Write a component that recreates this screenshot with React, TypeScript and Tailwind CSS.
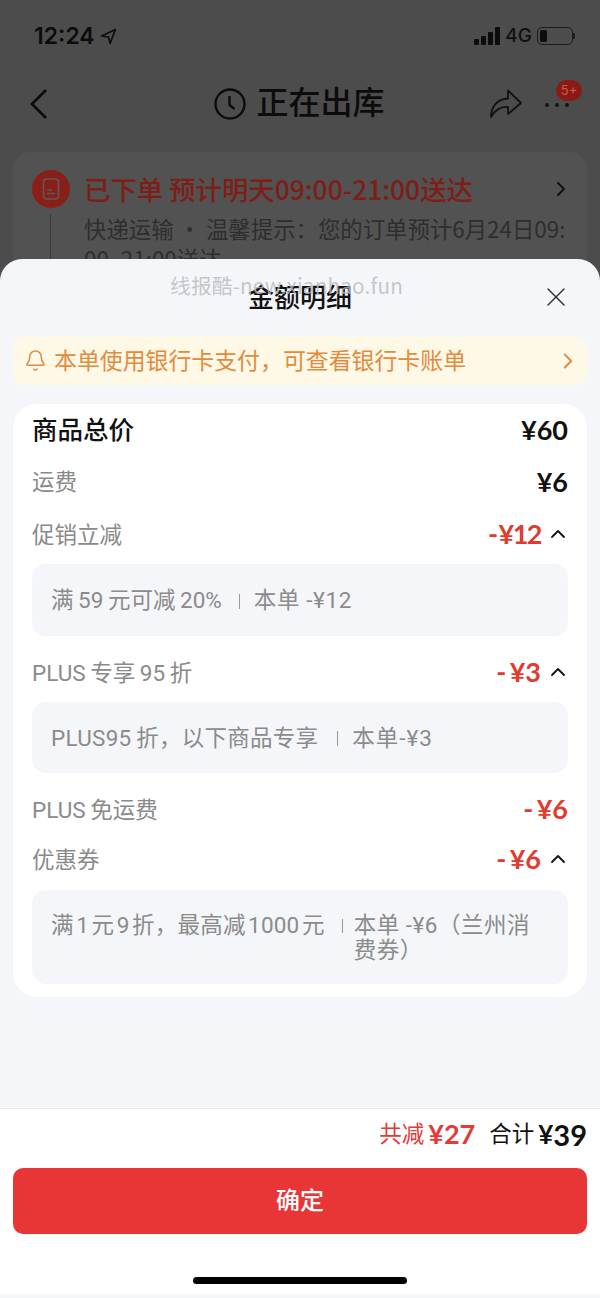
import { Bell, ChevronRight, ChevronUp, X } from "lucide-react";

const font = { fontFamily: 'Roboto, "Noto Sans CJK SC", sans-serif' };

function Row({ label, amount, open, amountClass, className }: { label: string; amount: string; open?: boolean; amountClass?: string; className?: string }) {
    return (
        <div className={`flex items-center justify-between h-[34px] ${className ?? ""}`}>
            <span className="pt-[2px] text-[22.5px] text-[#8a8a8a]">{label}</span>
            <span className="flex items-center">
                <span className={`-mt-[2px] text-[27px] font-bold text-[#e23a2e] font-['Lato','Noto_Sans_CJK_SC',sans-serif] ${amountClass ?? ""}`}>{amount}</span>
                {open && <ChevronUp className="ml-[5px] -mr-[2px] w-[24px] h-[24px] text-[#111] -mt-[3px]" strokeWidth={1.8} />}
            </span>
        </div>
    );
}

function Detail({ children, className }: { children: React.ReactNode; className?: string }) {
    return (
        <div className={`rounded-[14px] bg-[#f4f6fa] px-[19px] text-[22.5px] text-[#8b8b8b] ${className ?? ""}`}>
            {children}
        </div>
    );
}

export default function App() {
    return (
        <div className="relative w-[600px] h-[1298px] overflow-hidden flex flex-col bg-[#4c4c4c]" style={font}>
            {/* dimmed order page behind the sheet */}
            <div className="h-[281px] shrink-0 overflow-hidden px-[13px]">
                <div className="h-[72px] px-[21px] flex items-center justify-between text-[#0c0c0c]">
                    <div className="flex items-center gap-[5px]">
                        <span className="text-[23px] font-semibold font-['Inter',sans-serif]">12:24</span>
                        <svg width="17" height="17" viewBox="0 0 16 16" fill="none" stroke="#0c0c0c" strokeWidth="1.5">
                            <path d="M14.5 1.5 1.5 7.5l6.5 1 1.5 6z" strokeLinejoin="round" />
                        </svg>
                    </div>
                    <div className="flex items-center gap-[5px] -mr-[9px]">
                        <div className="flex items-end gap-[2px] h-[18px]">
                            <div className="w-[5px] h-[6px] bg-[#0c0c0c] rounded-[1px]" />
                            <div className="w-[5px] h-[9px] bg-[#0c0c0c] rounded-[1px]" />
                            <div className="w-[5px] h-[13px] bg-[#0c0c0c] rounded-[1px]" />
                            <div className="w-[5px] h-[18px] bg-[#0c0c0c] rounded-[1px]" />
                        </div>
                        <span className="text-[19px] font-medium text-[#101010] font-['Inter',sans-serif]">4G</span>
                        <div className="flex items-center">
                            <div className="w-[36px] h-[18px] rounded-[5px] border border-[#1c1c1c] p-[2px]">
                                <div className="w-[7px] h-full bg-[#0c0c0c] rounded-[2px]" />
                            </div>
                            <div className="w-[2px] h-[6px] bg-[#1c1c1c] rounded-r-[1px]" />
                        </div>
                    </div>
                </div>
                <div className="relative h-[65px] flex items-center justify-center text-[#0c0c0c]">
                    <svg className="absolute left-[15px] top-[15px]" width="22" height="34" viewBox="0 0 22 34" fill="none" stroke="#0c0c0c" strokeWidth="2.6">
                        <path d="M18 3 4 17l14 14" />
                    </svg>
                    <div className="flex items-center gap-[9px] -mt-[1px] -ml-[2px]">
                        <svg width="34" height="34" viewBox="0 0 34 34" fill="none" stroke="#0c0c0c" strokeWidth="2.4">
                            <circle cx="17" cy="17" r="14.5" />
                            <path d="M16.5 9v9l5 4" />
                        </svg>
                        <span className="text-[32px] leading-[40px] font-medium -mt-[3px]">正在出库</span>
                    </div>
                    <svg className="absolute left-[476px] top-[16px]" width="34" height="32" viewBox="0 0 34 32" fill="none" stroke="#111" strokeWidth="1.8" strokeLinejoin="round">
                        <path d="M19 2.5 32 15 19 26v-7C11 18.500 6 22 2 29c0-10 6-18 17-18.500z" />
                    </svg>
                    <div className="absolute left-[532px] top-[31px] flex gap-[6px]">
                        <div className="w-[4px] h-[4px] rounded-full bg-[#151515]" />
                        <div className="w-[4px] h-[4px] rounded-full bg-[#151515]" />
                        <div className="w-[4px] h-[4px] rounded-full bg-[#151515]" />
                    </div>
                    <div className="absolute left-[543px] top-[8px] w-[26px] h-[21px] rounded-full bg-[#8a1b14] flex items-center justify-center text-[13px] text-[#d05a50] font-['Inter',sans-serif]">
                        5+
                    </div>
                </div>
                <div className="mt-[15px] h-[140px] rounded-[18px] bg-[#525252] pt-[18px] pl-[19px] pr-[20px] font-['Noto_Sans_CJK_SC',sans-serif]">
                    <div className="flex items-center h-[38px]">
                        <div className="w-[38px] h-[38px] rounded-full bg-[#8a1f18] flex items-center justify-center shrink-0">
                            <svg width="18" height="22" viewBox="0 0 18 22" fill="none" stroke="#5a5a5a" strokeWidth="1.6">
                                <rect x="1.500" y="1" width="15" height="20" rx="3" />
                                <path d="M5 12h5M5 15.500h8" />
                            </svg>
                        </div>
                        <span className="ml-[14px] text-[26.4px] font-medium text-[#7f1d17] whitespace-nowrap">已下单 预计明天09:00-21:00送达</span>
                        <ChevronRight className="ml-auto -mr-[6px] w-[24px] h-[24px] text-[#0f0f0f]" strokeWidth={1.9} />
                    </div>
                    <div className="flex">
                        <div className="ml-[18px] w-px h-[60px] bg-[#3a3a3a] mt-[6px]" />
                        <div className="ml-[33px] pt-[5px] text-[22.4px] leading-[30px] text-[#2e2e2e] whitespace-nowrap">
                            <p>快递运输 · 温馨提示：您的订单预计6月24日09:</p>
                            <p>00–21:00送达</p>
                        </div>
                    </div>
                </div>
            </div>

            {/* price detail sheet */}
            <div className="flex-1 flex flex-col -mt-[22px] rounded-t-[22px] bg-[#f4f6fa] relative">
                <div className="h-[77px] relative flex items-center justify-center">
                    <span className="text-[26px] font-medium text-[#111] -mb-[1px]">金额明细</span>
                    <X className="absolute right-[28px] top-[22px] w-[32px] h-[32px] text-[#333]" strokeWidth={1.1} />
                </div>
                <div className="mx-[13px] h-[49px] rounded-[12px] bg-[#fef8e6] flex items-center pl-[11px] pr-[6px] text-[#e38b3d]">
                    <Bell className="w-[23px] h-[23px]" strokeWidth={1.6} />
                    <span className="ml-[7px] pt-[3px] text-[22.9px]">本单使用银行卡支付，可查看银行卡账单</span>
                    <ChevronRight className="ml-auto w-[26px] h-[26px]" strokeWidth={1.7} />
                </div>

                <div className="mt-[19px] mx-[13px] h-[593px] rounded-[24px] bg-white px-[19px] pt-[9px]">
                    <div className="flex items-center justify-between h-[34px]">
                        <span className="pt-[1px] text-[25.5px] font-medium text-[#111]">商品总价</span>
                        <span className="text-[27px] font-bold text-[#111] font-['Lato','Noto_Sans_CJK_SC',sans-serif]">¥60</span>
                    </div>
                    <div className="mt-[18px] flex items-center justify-between h-[34px]">
                        <span className="pt-[2px] text-[22.5px] text-[#8a8a8a]">运费</span>
                        <span className="text-[27px] font-bold text-[#111] font-['Lato','Noto_Sans_CJK_SC',sans-serif]">¥6</span>
                    </div>
                    <Row label="促销立减" amount="-&#8201;¥12" open amountClass="tracking-[-1.5px]" className="mt-[19px]" />
                    <Detail className="mt-[12px] h-[72px] pt-[2px] flex items-center">
                        满&#8201;59&#8201;元可减&#8201;20%
                        <span className="ml-[17px] mr-[14px] w-px h-[15px] bg-[#999]" />
                        <span className="tracking-[0.6px]">本单 -¥12</span>
                    </Detail>
                    <Row label="PLUS&#8201;专享&#8201;95&#8201;折" amount="-&#8201;¥3" open className="mt-[20px]" />
                    <Detail className="mt-[12px] h-[71px] pt-[2px] flex items-center">
                        <span className="tracking-[0.25px]">PLUS95&#8201;折，以下商品专享</span>
                        <span className="ml-[19px] mr-[14px] w-px h-[15px] bg-[#999]" />
                        <span className="tracking-[1px]">本单-¥3</span>
                    </Detail>
                    <Row label="PLUS&#8201;免运费" amount="-&#8201;¥6" className="mt-[20px]" />
                    <Row label="优惠券" amount="-&#8201;¥6" open className="mt-[16px]" />
                    <Detail className="mt-[13px] h-[94px] pt-[23px] flex items-start leading-[25px]">
                        <span className="whitespace-nowrap tracking-[0.2px]">满&#8202;1&#8202;元&#8202;9&#8202;折，最高减&#8202;1000&#8202;元</span>
                        <span className="ml-[17px] mr-[11px] mt-[6px] w-px h-[14px] bg-[#999] shrink-0" />
                        <span className="whitespace-nowrap tracking-[0.5px]">
                            本单 -¥6（兰州消
                            <br />
                            费券）
                        </span>
                    </Detail>
                </div>

                <div className="mt-[111px] flex-1 bg-white border-t border-[#e8e8e8] px-[13px] mb-[4px] relative">
                    <div className="flex items-center justify-end h-[53px] -mt-[1px]">
                        <span className="text-[22.5px] text-[#e53935]">共减</span>
                        <span className="ml-[4px] text-[27px] font-bold text-[#e53935] font-['Lato',sans-serif]">¥27</span>
                        <span className="ml-[14px] text-[22.5px] text-[#111]">合计</span>
                        <span className="ml-[4px] text-[26px] font-bold text-[#111] font-['Lato',sans-serif]">¥</span>
                        <span className="text-[29px] font-bold text-[#111] font-['Lato',sans-serif]">39</span>
                    </div>
                    <button className="mt-[7px] w-full h-[66px] rounded-[10px] bg-[#e83535] text-white text-[24px] font-medium pb-[1px]">确定</button>
                    <div className="absolute left-[193px] bottom-[10px] w-[214px] h-[7px] rounded-full bg-black" />
                </div>
            </div>

            {/* watermark */}
            <div className="absolute left-[170px] top-[272px] text-[20.7px] leading-[26px] text-[#b9b9bd]/80 tracking-[0.2px] whitespace-nowrap font-['Noto_Sans_CJK_SC',sans-serif]">
                线报酷-new.xianhao.fun
            </div>
        </div>
    );
}
